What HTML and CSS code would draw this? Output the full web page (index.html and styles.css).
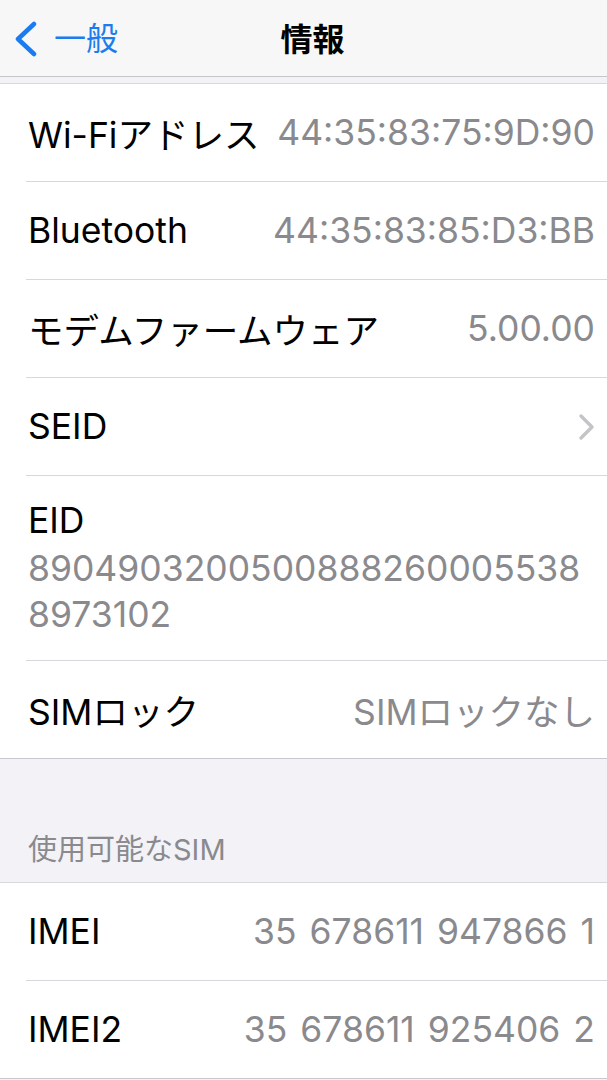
FILE: index.html
```html
<!DOCTYPE html>
<html lang="ja">
<head>
    <meta charset="UTF-8">
    <meta name="viewport" content="width=device-width, initial-scale=1.0">
    <title>情報</title>
    <link rel="stylesheet" href="styles.css">
</head>
<body>
    <header class="nav">
        <a class="nav-back" href="#">
            <svg class="back-chevron" width="26" height="36" viewBox="0 0 26 36">
                <path d="M21 3 L5 18 L21 33" fill="none" stroke="#1b7cf0" stroke-width="4.5" stroke-linecap="round" stroke-linejoin="round"/>
            </svg>
            <span>一般</span>
        </a>
        <h1 class="nav-title">情報</h1>
    </header>

    <div class="top-gap"></div>

    <ul class="group">
        <li class="row">
            <span class="label">Wi-Fiアドレス</span>
            <span class="value">44:35:83:75:9D:90</span>
        </li>
        <li class="row">
            <span class="label">Bluetooth</span>
            <span class="value">44:35:83:85:D3:BB</span>
        </li>
        <li class="row">
            <span class="label">モデムファームウェア</span>
            <span class="value">5.00.00</span>
        </li>
        <li class="row">
            <span class="label">SEID</span>
            <svg class="chevron" width="17" height="28" viewBox="0 0 17 28">
                <path d="M3 3 L14 14 L3 25" fill="none" stroke="#c4c4c7" stroke-width="3.4" stroke-linecap="round" stroke-linejoin="round"/>
            </svg>
        </li>
        <li class="row row-stacked">
            <span class="label">EID</span>
            <span class="value value-block">8904903200500888260005538<br>8973102</span>
        </li>
        <li class="row">
            <span class="label">SIMロック</span>
            <span class="value">SIMロックなし</span>
        </li>
    </ul>

    <div class="section-header">使用可能なSIM</div>

    <ul class="group">
        <li class="row">
            <span class="label">IMEI</span>
            <span class="value value-spaced">35 678611 947866 1</span>
        </li>
        <li class="row">
            <span class="label">IMEI2</span>
            <span class="value value-spaced">35 678611 925406 2</span>
        </li>
    </ul>
</body>
</html>
```

FILE: styles.css
```css
body {
    margin: 0;
    background: #f2f2f7;
    font-family: "Inter", "Noto Sans CJK JP", sans-serif;
    color: #000;
    -webkit-font-smoothing: antialiased;
}
.nav {
    height: 76px;
    background: #f7f7f7;
    border-bottom: 1px solid #c6c6c8;
    display: flex;
    align-items: center;
    justify-content: center;
    position: relative;
    padding-left: 18px;
    box-sizing: content-box;
}
.nav-back {
    position: absolute;
    left: 13px;
    top: 21px;
    display: flex;
    align-items: center;
    gap: 15px;
    color: #1b7cf0;
    text-decoration: none;
    font-size: 32px;
    line-height: 36px;
}
.nav-title {
    margin: 0 0 2px;
    font-size: 32px;
    font-weight: 700;
}
.top-gap {
    height: 6px;
}
.group {
    list-style: none;
    margin: 0;
    padding: 0;
    background: #fff;
    border-top: 1px solid #d8d8dc;
    border-bottom: 1px solid #c8c8cc;
}
.row {
    display: flex;
    align-items: center;
    justify-content: space-between;
    min-height: 97px;
    margin-left: 26px;
    padding: 0 12px 0 2px;
    border-bottom: 1px solid #d8d8dc;
    font-size: 35.5px;
}
.row:last-child {
    border-bottom: none;
}
.label {
    white-space: nowrap;
}
.value {
    color: #8a8a8e;
    white-space: nowrap;
}
.value-spaced {
    word-spacing: 3px;
}
.row-stacked {
    flex-direction: column;
    align-items: flex-start;
    justify-content: center;
    min-height: 185px;
    padding-top: 0;
    box-sizing: border-box;
}
.value-block {
    line-height: 46px;
    margin-top: 4px;
}
.section-header {
    height: 123px;
    box-sizing: border-box;
    padding: 0 0 14px 28px;
    display: flex;
    align-items: flex-end;
    font-size: 29px;
    color: #8a8a8e;
}
```
